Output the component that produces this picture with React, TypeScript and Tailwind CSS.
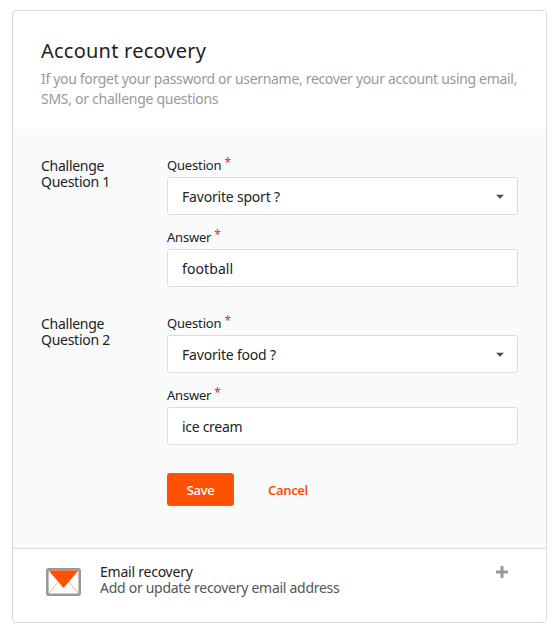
import React from 'react';

function Field({ label, value, select = false }: { label: string; value: string; select?: boolean }) {
  return (
    <div className="flex flex-col">
      <label className={`flex h-5 items-start whitespace-nowrap text-[13px] leading-4 ${label === 'Question' ? 'tracking-[-0.16px]' : 'tracking-[-0.2px]'}`}>
        {label}
        <span className="-mt-[2px] ml-[3px] text-xs leading-4 text-[#e02b2b]">*</span>
      </label>
      <div className="flex h-[38px] items-center justify-between rounded-[3px] border border-[#dadcde] bg-white pl-[14px] pr-[13px] pt-px text-sm">
        <span className={`whitespace-nowrap ${value.startsWith('Favorite') ? 'tracking-[-0.2px]' : value === 'football' ? 'tracking-[0.1px]' : 'tracking-[-0.3px]'}`}>{value}</span>
        {select && (
          <svg width="8" height="5" viewBox="0 0 8 5" className="shrink-0"><path d="M0 .7h8L4 4.8z" fill="#4c4c4c" /></svg>
        )}
      </div>
    </div>
  );
}

function Challenge({ number, question, answer }: { number: number; question: string; answer: string }) {
  return (
    <section className="flex">
      <h2 className="w-[126px] shrink-0 pt-px text-sm leading-4 tracking-[-0.27px]">
        Challenge<br />Question {number}
      </h2>
      <div className="flex w-[351px] flex-col gap-[14px]">
        <Field label="Question" value={question} select />
        <Field label="Answer" value={answer} />
      </div>
    </section>
  );
}

export default function App() {
  return (
    <main className="h-[633px] bg-white pl-3 pt-[10px] font-['Noto_Sans',sans-serif] text-[#222]">
      <div className="flex h-[613px] w-[535px] flex-col overflow-hidden rounded-[4px] border border-[#d9dbdd]">
        <header className="h-[118px] shrink-0 pl-7 pt-[26px]">
          <h1 className="text-xl leading-7 tracking-[0.23px]">Account recovery</h1>
          <p className="whitespace-nowrap pt-1 text-sm leading-5 tracking-[-0.32px] text-[#999]">
            <span className="block">If you forget your password or username, recover your account using email,</span>
            <span className="block tracking-[-0.28px]">SMS, or challenge questions</span>
          </p>
        </header>
        <div className="h-[420px] shrink-0 border-b border-[#d9dbdd] bg-[#f9fafc] pl-7 pt-7">
          <div className="flex flex-col gap-7">
            <Challenge number={1} question="Favorite sport ?" answer="football" />
            <Challenge number={2} question="Favorite food ?" answer="ice cream" />
          </div>
          <div className="ml-[126px] mt-7 flex gap-[14px] text-[13px] font-medium">
            <button className="h-[33px] w-[67px] rounded-[3px] bg-[#ff5100] pt-[3px] tracking-[-0.3px] text-white">Save</button>
            <button className="h-[33px] w-[79px] rounded-[3px] pl-px pt-[3px] font-semibold tracking-[-0.35px] text-[#ff5100]">Cancel</button>
          </div>
        </div>
        <section className="flex flex-1 pl-[33px] pr-[38px] pt-[15px] text-sm leading-4">
          <svg width="35" height="28" viewBox="0 0 35 28" className="mt-[4px] shrink-0">
            <rect x="1.3" y="1.3" width="32.4" height="25.4" rx="1.5" fill="white" stroke="#999" strokeWidth="2.6" />
            <path d="m3 25 9-11m20 11-9-11" stroke="#ffa27c" strokeWidth=".8" fill="none" />
            <path d="M2.6 2.6h29.8L17.5 20z" fill="#ff5100" />
          </svg>
          <div className="ml-[19px] flex-1 whitespace-nowrap">
            <h2 className="tracking-[-0.23px]">Email recovery</h2>
            <p className="tracking-[-0.28px] text-[#555]">Add or update recovery email address</p>
          </div>
          <svg width="12" height="12" viewBox="0 0 12 12" className="mt-[2px]"><path d="M4.5 0h3v4.5H12v3H7.5V12h-3V7.5H0v-3h4.5z" fill="#999" /></svg>
        </section>
      </div>
    </main>
  );
}
